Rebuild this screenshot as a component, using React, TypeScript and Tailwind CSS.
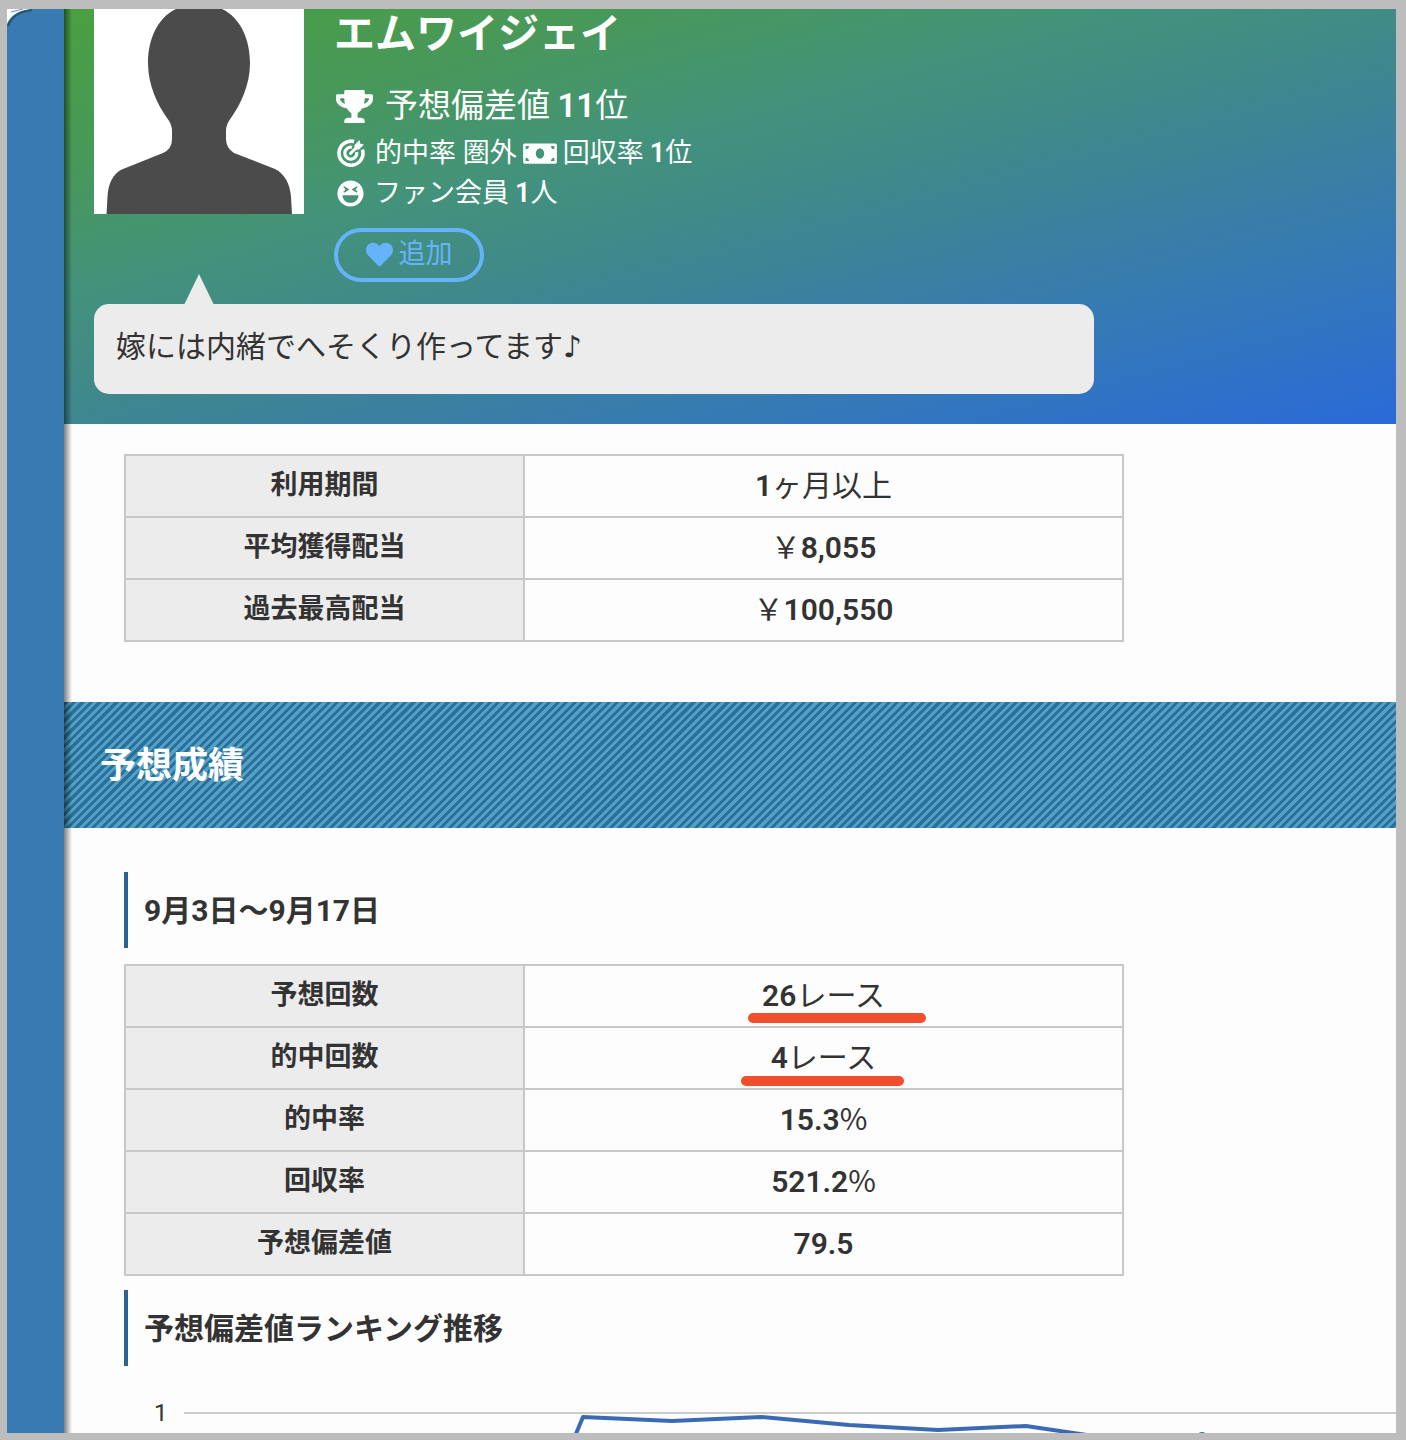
import React from "react";
import { FaTrophy, FaMoneyBill, FaLaughSquint, FaHeart } from "react-icons/fa";

type Row = { label: string; value: string; mark?: string };

const periodRows: Row[] = [
  { label: "利用期間", value: "1ヶ月以上" },
  { label: "平均獲得配当", value: "￥8,055" },
  { label: "過去最高配当", value: "￥100,550" },
];

const resultRows: Row[] = [
  { label: "予想回数", value: "26レース", mark: "bottom-[3px] left-[223px] w-[178px]" },
  { label: "的中回数", value: "4レース", mark: "bottom-[2px] left-[216px] w-[163px]" },
  { label: "的中率", value: "15.3%" },
  { label: "回収率", value: "521.2%" },
  { label: "予想偏差値", value: "79.5" },
];

/* Digits are set in a heavier Latin face than the Japanese text around them. */
function Mixed({ text }: { text: string }) {
  const parts = text.split(/([0-9.,]+)/).filter(Boolean);
  return (
    <>
      {parts.map((part, i) =>
        /^[0-9.,]+$/.test(part) ? (
          <span key={i} className="font-semibold">
            {part}
          </span>
        ) : (
          <span key={i} className="font-['Noto_Sans_CJK_JP',sans-serif] leading-none">
            {part}
          </span>
        ),
      )}
    </>
  );
}

function DataTable({ rows, label }: { rows: Row[]; label: string }) {
  return (
    <table
      aria-label={label}
      className="w-full max-w-[1000px] table-fixed border-collapse border-2 border-[#c8c8c8]"
    >
      <tbody>
        {rows.map((row) => (
          <tr key={row.label} className="h-[62px]">
            <th
              scope="row"
              className="w-[399px] border-2 border-[#c8c8c8] bg-[#ececec] pb-[2px] text-[27px] leading-9 font-bold"
            >
              {row.label}
            </th>
            <td className="relative border-2 border-[#c8c8c8] text-center text-[30px] leading-10">
              <Mixed text={row.value} />
              {row.mark && (
                <span
                  aria-hidden="true"
                  className={`absolute h-[10px] rounded-full bg-[#f04e2c] ${row.mark}`}
                />
              )}
            </td>
          </tr>
        ))}
      </tbody>
    </table>
  );
}

function TargetIcon() {
  return (
    <svg viewBox="0 0 28 28" className="size-7" fill="none" stroke="currentColor" aria-hidden="true">
      <path d="M17 2.600A12 12 0 1 0 25.400 10.500" strokeWidth="3.600" />
      <path d="M15 8.300A6 6 0 1 0 19.700 13" strokeWidth="3.200" />
      <path d="M13.500 14.500L20 8" strokeWidth="3" strokeLinecap="round" />
      <path d="M17.500 10.500V6L22.500 1L23.300 4.700L27 5.500L22 10.500Z" fill="currentColor" stroke="none" />
    </svg>
  );
}

function Portrait() {
  return (
    <svg viewBox="0 0 210 205" className="h-[205px] w-[210px] shrink-0 bg-white" role="img" aria-label="プロフィール画像">
      <path
        fill="#4b4b4b"
        d="M82 0C63 9 54 31 54 54C54 77 64 96 73 109Q78 115 78 122V130Q78 140 69 144L29 160C19 164 14 175 13.500 188L12.500 205H198L197 188C196 175 191 165 181 160L140 144Q132 139 132 130V122Q132 115 137 109C146 96 156 77 156 54C156 31 147 9 128 0Z"
      />
    </svg>
  );
}

function Heading({ children }: { children: React.ReactNode }) {
  return (
    <h3 className="flex h-[76px] items-center border-l-4 border-[#2a6496] pt-[2px] pl-4 text-[30px] leading-10 font-bold">
      <span>{children}</span>
    </h3>
  );
}

function RankChart() {
  return (
    <figure className="mt-[27px] flex h-[60px] items-start pl-[30px]">
      <span className="mt-1 w-[30px] text-[24px] leading-8">1</span>
      <svg viewBox="0 0 1212 60" preserveAspectRatio="xMinYMin slice" className="h-[60px] min-w-0 flex-1" aria-label="ランキング推移" role="img">
        <path d="M0 20H1212" stroke="#ccc" strokeWidth="2" fill="none" />
        <path d="M384 60L399 24L488 28L577 24L665 32L754 37L842 33L930 46L976 54L1018 41L1062 54" stroke="#3b69b4" strokeWidth="4" strokeLinejoin="round" fill="none" />
      </svg>
    </figure>
  );
}

export default function App() {
  return (
    <div className="h-screen overflow-hidden bg-[#bdbdbd] pt-[9px] pr-[10px] pb-[7px] pl-[7px] font-[Roboto,'Noto_Sans_CJK_JP',sans-serif] text-[#333]">
      <div className="flex h-full overflow-hidden">
        <aside className="relative w-[57px] shrink-0 bg-[#397ab2]">
          <svg viewBox="0 0 28 22" className="absolute top-0 left-0 h-[22px] w-7" aria-hidden="true">
            <path d="M0 0H25Q5 2 0 15Z" fill="#fff" />
            <path d="M4 3L16 0" stroke="#5f8fb5" strokeWidth="1" />
            <path d="M25 1Q6 3 1 17" fill="none" stroke="#28516f" strokeWidth="2" />
          </svg>
        </aside>
        <main className="relative min-w-0 flex-1 overflow-hidden bg-[#fdfdfd]">
          <div aria-hidden="true" className="absolute inset-y-0 left-0 z-10 w-2 bg-linear-to-r from-black/50 to-transparent" />

          <header className="h-[415px] bg-[linear-gradient(165deg,#4aa040_0%,#48985a_20%,#43937a_36%,#408a87_48%,#3c829c_61%,#3579b6_77%,#2a6ad8_100%)] px-[30px] text-white">
            <div className="flex gap-[30px]">
              <Portrait />
              <div className="min-w-0">
                <h1 className="text-[41px] leading-[50px] font-bold">エムワイジェイ</h1>
                <p className="mt-[22px] flex items-center gap-3 pl-[2px] text-[33px] leading-[50px]">
                  <FaTrophy aria-hidden="true" className="h-[33px] w-[37px]" />
                  <span><Mixed text="予想偏差値 11位" /></span>
                </p>
                <p className="mt-[2px] flex items-center gap-[6px] pl-[3px] text-[27px] leading-10">
                  <span className="flex items-center gap-[10px]">
                    <TargetIcon />
                    <span>的中率 圏外</span>
                  </span>
                  <FaMoneyBill aria-hidden="true" className="h-[27px] w-[34px]" />
                  <span><Mixed text="回収率 1位" /></span>
                </p>
                <p className="flex items-center gap-[10px] pl-[3px] text-[27px] leading-10">
                  <FaLaughSquint aria-hidden="true" className="size-[27px]" />
                  <span><Mixed text="ファン会員 1人" /></span>
                </p>
                <button type="button" className="mt-[15px] flex h-[54px] w-[150px] items-center justify-center gap-[6px] rounded-full border-4 border-[#66b3fb] pb-[2px] text-[27px] leading-10 text-[#66b3fb]">
                  <FaHeart aria-hidden="true" className="size-[27px]" />
                  追加
                </button>
              </div>
            </div>
            <div className="relative mt-[22px] h-[90px] max-w-[1000px] rounded-[15px] bg-[#ececec] px-[22px] pt-5 text-[30px] leading-[45px] text-[#333]">
              <span aria-hidden="true" className="absolute -top-[30px] left-[90px] h-[31px] w-[30px] bg-[#ececec] [clip-path:polygon(50%_0,100%_100%,0_100%)]" />
              <p>嫁には内緒でへそくり作ってます<span className="font-['DejaVu_Sans']">♪</span></p>
            </div>
          </header>

          <section className="px-[60px] pt-[30px] pb-[60px]">
            <DataTable rows={periodRows} label="利用状況" />
          </section>

          <h2 className="flex h-[126px] items-center bg-[#5aa7cb] bg-[repeating-linear-gradient(135deg,#28719a_0px,#28719a_3px,#559fc4_3px,#559fc4_6px)] px-9 pt-[2px] text-[36px] leading-[50px] font-bold text-white">
            予想成績
          </h2>

          <section className="pt-11 pl-[60px]">
            <Heading>9月3日〜9月17日</Heading>
            <div className="mt-4 mb-[14px]">
              <DataTable rows={resultRows} label="予想成績" />
            </div>
            <Heading>予想偏差値ランキング推移</Heading>
            <RankChart />
          </section>
        </main>
      </div>
    </div>
  );
}
